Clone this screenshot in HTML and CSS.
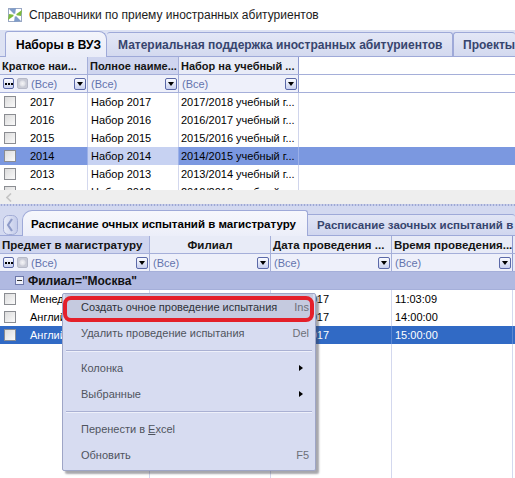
FILE: index.html
```html
<!DOCTYPE html>
<html lang="ru">
<head>
<meta charset="utf-8">
<title>Справочники</title>
<link rel="stylesheet" href="styles.css">
</head>
<body>
<div class="window">
  <div class="titlebar">
    <svg class="appicon" viewBox="0 0 16 16" width="16" height="16">
      <rect x="1.5" y="1.5" width="13" height="13" fill="none" stroke="#9aa8c4" stroke-width="1"/>
      <polygon points="8,8 2,2 9,1" fill="#7f9cc8"/>
      <polygon points="8,8 15,3 14,9" fill="#7dbb3c"/>
      <polygon points="8,8 14,14 7,15" fill="#7f9cc8"/>
      <polygon points="8,8 1,13 2,7" fill="#7dbb3c"/>
      <circle cx="8" cy="8" r="1.6" fill="#fff"/>
    </svg>
    <span class="title">Справочники по приему иностранных абитуриентов</span>
  </div>

  <div class="tabs1">
    <div class="tab1 active w1">Наборы в ВУЗ</div>
    <div class="tab1 w2">Материальная поддержка иностранных абитуриентов</div>
    <div class="tab1 w3">Проекты</div>
  </div>

  <div class="toppanel">
    <div class="row head">
      <div class="cell a1 hcell">Краткое наи...</div>
      <div class="cell a2 hcell hot">Полное наиме...</div>
      <div class="cell a3 hcell last">Набор на учебный ...</div>
      <div class="fill blank"></div>
    </div>
    <div class="row filter">
      <div class="cell a1 fcell"><span class="dots"><i></i><i></i><i></i></span><span class="clr"></span><span class="all">(Все)</span><span class="dd"></span></div>
      <div class="cell a2 fcell"><span class="all">(Все)</span><span class="dd"></span></div>
      <div class="cell a3 fcell last"><span class="all">(Все)</span><span class="dd"></span></div>
      <div class="fill blank"></div>
    </div>
    <div class="row data">
      <div class="cell a1"><span class="chk"></span><span class="txt">2017</span></div>
      <div class="cell a2">Набор 2017</div>
      <div class="cell a3 dl">2017/2018 учебный г...</div>
      <div class="fill"></div>
    </div>
    <div class="row data">
      <div class="cell a1"><span class="chk"></span><span class="txt">2016</span></div>
      <div class="cell a2">Набор 2016</div>
      <div class="cell a3 dl">2016/2017 учебный г...</div>
      <div class="fill"></div>
    </div>
    <div class="row data">
      <div class="cell a1"><span class="chk"></span><span class="txt">2015</span></div>
      <div class="cell a2">Набор 2015</div>
      <div class="cell a3 dl">2015/2016 учебный г...</div>
      <div class="fill"></div>
    </div>
    <div class="row data sel1">
      <div class="cell a1"><span class="chk"></span><span class="txt">2014</span></div>
      <div class="cell a2 focus">Набор 2014</div>
      <div class="cell a3 dl">2014/2015 учебный г...</div>
      <div class="fill"></div>
    </div>
    <div class="row data">
      <div class="cell a1"><span class="chk"></span><span class="txt">2013</span></div>
      <div class="cell a2">Набор 2013</div>
      <div class="cell a3 dl">2013/2014 учебный г...</div>
      <div class="fill"></div>
    </div>
    <div class="row data">
      <div class="cell a1"><span class="chk"></span><span class="txt">2012</span></div>
      <div class="cell a2">Набор 2012</div>
      <div class="cell a3 dl">2012/2013 учебный г...</div>
      <div class="fill"></div>
    </div>
  </div>

  <div class="hband">
    <svg class="lchev" viewBox="0 0 6 9" width="6" height="9"><polyline points="5,0.5 1,4.5 5,8.5" fill="none" stroke="#c4c4c4" stroke-width="1.6"/></svg>
  </div>
  <div class="splitter"></div>

  <div class="bottom">
    <div class="tabs2">
      <div class="navbtn">
        <svg viewBox="0 0 15 20" width="15" height="20">
          <defs><linearGradient id="nb" x1="0" y1="0" x2="1" y2="0"><stop offset="0" stop-color="#e9ecf8"/><stop offset="1" stop-color="#c3cbea"/></linearGradient></defs>
          <rect x="0.5" y="0.5" width="14" height="19" rx="5" fill="url(#nb)" stroke="#a3add6"/>
          <polyline points="9,4 5,10 9,16" fill="none" stroke="#8e9bc8" stroke-width="2.2" stroke-linejoin="round"/>
        </svg>
      </div>
      <div class="tab2 active b1">Расписание очных испытаний в магистратуру</div>
      <div class="tab2 b2">Расписание заочных испытаний в</div>
    </div>

    <div class="grid2">
      <div class="row head">
        <div class="cell b-c1 hcell hot">Предмет в магистратуру</div>
        <div class="cell b-c2 hcell center">Филиал</div>
        <div class="cell b-c3 hcell">Дата проведения ...</div>
        <div class="cell b-c4 hcell last">Время проведения...</div>
        <div class="fill head-fill"></div>
      </div>
      <div class="row filter">
        <div class="cell b-c1 fcell"><span class="dots"><i></i><i></i><i></i></span><span class="clr"></span><span class="all">(Все)</span><span class="dd"></span></div>
        <div class="cell b-c2 fcell"><span class="all">(Все)</span><span class="dd"></span></div>
        <div class="cell b-c3 fcell"><span class="all">(Все)</span><span class="dd"></span></div>
        <div class="cell b-c4 fcell last"><span class="all">(Все)</span><span class="dd"></span></div>
        <div class="fill head-fill"></div>
      </div>
      <div class="row group">
        <span class="minus"></span><span class="gtxt">Филиал="Москва"</span>
      </div>
      <div class="row data">
        <div class="cell b-c1"><span class="chk"></span><span class="txt">Менеджмент</span></div>
        <div class="cell b-c2">Москва</div>
        <div class="cell b-c3">12.07.2017</div>
        <div class="cell b-c4">11:03:09</div>
        <div class="fill"></div>
      </div>
      <div class="row data">
        <div class="cell b-c1"><span class="chk"></span><span class="txt">Английский язык</span></div>
        <div class="cell b-c2">Москва</div>
        <div class="cell b-c3">20.07.2017</div>
        <div class="cell b-c4">14:00:00</div>
        <div class="fill"></div>
      </div>
      <div class="row data sel2">
        <div class="cell b-c1"><span class="chk"></span><span class="txt">Английский язык</span></div>
        <div class="cell b-c2">Москва</div>
        <div class="cell b-c3">21.07.2017</div>
        <div class="cell b-c4">15:00:00</div>
        <div class="fill"></div>
      </div>
      <div class="row rest">
        <div class="cell b-c1"></div>
        <div class="cell b-c2"></div>
        <div class="cell b-c3"></div>
        <div class="cell b-c4"></div>
        <div class="fill"></div>
      </div>
    </div>
  </div>

  <div class="menu">
    <div class="mi first"><span class="ml">Создать очное проведение испытания</span><span class="ms">Ins</span></div>
    <div class="mi"><span class="ml">Удалить проведение испытания</span><span class="ms">Del</span></div>
    <div class="msep"></div>
    <div class="mi"><span class="ml">Колонка</span><span class="arrow"></span></div>
    <div class="mi"><span class="ml">Выбранные</span><span class="arrow"></span></div>
    <div class="msep"></div>
    <div class="mi"><span class="ml">Перенести в <u>E</u>xcel</span></div>
    <div class="mi"><span class="ml">Обновить</span><span class="ms">F5</span></div>
  </div>
  <div class="redmark"></div>
</div>
</body>
</html>
```

FILE: styles.css
```css
* { box-sizing: border-box; margin: 0; padding: 0; }
html, body { width: 515px; height: 478px; overflow: hidden; background: #fff; }
body { font-family: "Liberation Sans", Arial, sans-serif; font-size: 11px; color: #000; }

.window { position: relative; display: flex; flex-direction: column; height: 478px; }

/* title bar */
.titlebar { height: 30px; flex: none; display: flex; align-items: center; padding-left: 7px; gap: 6px; background: #fff; font-size: 12px; color: #1b1b1b; }
.appicon { flex: none; }

/* top tabs */
.tabs1 { height: 27px; flex: none; display: flex; align-items: flex-end; background: #dde2f3; border-bottom: 1px solid #9ea9d8; padding-left: 5px; }
.tab1 { height: 24px; display: flex; align-items: center; padding-left: 10px; font-weight: bold; font-size: 12px; color: #37456e; background: linear-gradient(#e3e7f6, #d3d9ef); border: 1px solid #9ea9d8; border-bottom: none; border-radius: 3px 3px 0 0; white-space: nowrap; overflow: hidden; }
.tab1.active { height: 26px; margin-bottom: -1px; background: linear-gradient(#f4f5fb, #e9ecf8); color: #000; border-radius: 3px 8px 0 0; }
.tab1.w1 { width: 102px; }
.tab1.w2 { width: 346px; padding-left: 11px; border-left: none; }
.tab1.w3 { flex: 1; padding-left: 9px; border-left: 1px solid #9ea9d8; border-right: none; }

/* grid common */
.row { display: flex; height: 18px; flex: none; }
.cell { height: 100%; display: flex; align-items: center; white-space: nowrap; overflow: hidden; border-right: 1px solid #d3d8ee; padding-left: 3px; }
.fill { flex: 1; }
.hcell { font-weight: bold; font-size: 11.5px; color: #141414; background: #e8ebf7; border-right: 1px solid #a5afd9; padding-left: 3px; }
.toppanel .hcell { font-size: 11px; padding-left: 2px; }
.hcell.hot { background: #cfd5ef; }
.hcell.center { justify-content: center; padding-left: 0; }
.head { border-bottom: 1px solid #a5afd9; height: 18px; }
.filter { border-bottom: 1px solid #a5afd9; height: 18px; }
.fcell { background: #eef0fa; border-right: 1px solid #a5afd9; padding-left: 3px; padding-right: 1px; }
.last { border-right: 1px solid #8e99cf; }
.blank { background: #fff; }
.head-fill { background: #e8ebf7; }

.all { flex: 1; color: #6373ad; }
.dd { position: relative; flex: none; width: 12px; height: 12px; border: 1px solid #5b69a8; border-radius: 2px; background: linear-gradient(#fbfcff, #c7cfee); }
.dd::after { content: ""; position: absolute; left: 2px; top: 3px; border-top: 4px solid #000; border-left: 3.5px solid transparent; border-right: 3.5px solid transparent; }
.dots { flex: none; width: 11px; height: 11px; border: 1px solid #5b69a8; border-radius: 2px; background: linear-gradient(#fbfcff, #c7cfee); display: flex; align-items: center; justify-content: center; gap: 1px; margin-right: 3px; }
.dots i { width: 2px; height: 2px; background: #000; display: block; }
.clr { flex: none; width: 11px; height: 11px; border: 1px solid #b6b9c8; border-radius: 2px; background: radial-gradient(circle at 50% 50%, #f4f4f6 0, #e0e1e8 2.5px, #c9cbd6 3.5px, #c9cbd6 100%); margin-right: 3px; }

.chk { flex: none; width: 12px; height: 12px; border: 1px solid #8b8d92; background: linear-gradient(135deg, #dcdcdc, #fafafa); margin-left: 1px; margin-right: 14px; }
.data .cell { color: #000; }
.dl { padding-left: 2px; }

/* top panel */
.toppanel { height: 133px; flex: none; overflow: hidden; background: #fff; }
.a1 { width: 88px; }
.a2 { width: 91px; }
.a3 { width: 120px; border-right: 1px solid #d0d5ec; }
.toppanel .head .a3, .toppanel .filter .a3 { border-right: 1px solid #8e99cf; }
.sel1 { background: #7b98e0; }
.sel1 .cell { border-right-color: #9bb0e8; }
.sel1 .focus { background: #c7d2f2; }

/* band & splitter */
.hband { height: 14px; flex: none; background: #eeeeee; display: flex; align-items: center; padding-left: 6px; }
.splitter { height: 2px; flex: none; background: #c6cdea; background-image: radial-gradient(circle, #9da7d3 0.6px, transparent 0.8px); background-size: 3px 2px; }

/* bottom */
.bottom { flex: 1; display: flex; flex-direction: column; background: #d3d9f0; min-height: 0; }
.tabs2 { height: 30px; flex: none; display: flex; align-items: flex-end; padding-left: 3px; border-bottom: 1px solid #9ea9d8; }
.navbtn { width: 15px; height: 20px; margin-right: 4px; flex: none; }
.navbtn svg { display: block; }
.tab2 { height: 21px; display: flex; align-items: center; font-weight: bold; font-size: 11.5px; color: #37456e; background: linear-gradient(#e1e5f5, #d0d6ef); border: 1px solid #9ea9d8; border-bottom: none; white-space: nowrap; overflow: hidden; }
.tab2.active { height: 26px; margin-bottom: -1px; background: linear-gradient(#f6f7fc, #eceef9); color: #000; border-radius: 10px 3px 0 0; padding-left: 8px; }
.b1 { width: 286px; }
.b2 { flex: 1; padding-left: 9px; border-left: none; border-right: none; border-radius: 0 3px 0 0; }

.grid2 { flex: 1; display: flex; flex-direction: column; background: #fff; min-height: 0; }
.b-c1 { width: 150px; }
.b-c2 { width: 121px; }
.b-c3 { width: 121px; }
.b-c4 { width: 121px; }
.grid2 .head .cell { padding-left: 2px; }
.grid2 .head .b-c2 { padding-left: 0; }
.grid2 .data .b-c3, .grid2 .data .b-c4 { padding-left: 3px; }

.group { background: #b0b9e1; align-items: center; padding-left: 15px; border-bottom: 1px solid #a5afd9; }
.minus { width: 9px; height: 9px; border: 1px solid #6d77a8; background: #eef0fa; position: relative; margin-right: 4px; }
.minus::after { content: ""; position: absolute; left: 1px; top: 3px; width: 5px; height: 1px; background: #333; }
.gtxt { font-weight: bold; font-size: 12px; color: #111; }

.sel2 { background: #316ac5; }
.sel2 .cell { color: #fff; border-right-color: #5a87d2; }
.rest { flex: 1; height: auto; }

/* context menu */
.menu { position: absolute; left: 62px; top: 293px; width: 254px; height: 178px; background: #d7dcf1; border: 1px solid #9ea5c6; border-radius: 2px; padding: 0 2px; box-shadow: 3px 3px 2px rgba(60, 60, 70, 0.45); }
.mi { height: 26px; display: flex; align-items: center; padding-left: 16px; padding-right: 4px; color: #4f545e; font-size: 11px; }
.mi .ml { flex: 1; }
.mi .ms { color: #6d7078; }
.mi.first { background: #c5cadf; color: #2e3138; }
.arrow { width: 0; height: 0; border-left: 4px solid #000; border-top: 3.5px solid transparent; border-bottom: 3.5px solid transparent; margin-right: 6px; }
.msep { height: 9px; display: flex; align-items: center; }
.msep::after { content: ""; flex: 1; height: 1px; background: #aab1d3; box-shadow: 0 1px 0 #eef0fa; margin: 0 1px; }
.redmark { position: absolute; left: 63px; top: 296px; width: 251px; height: 26px; border: 4px solid #e4202a; border-radius: 8px; }
```
